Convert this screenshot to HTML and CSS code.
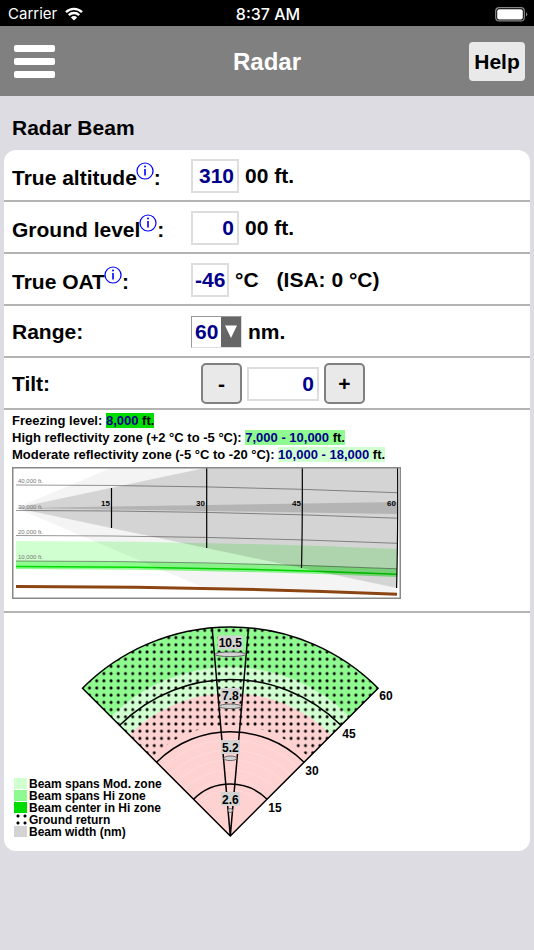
FILE: index.html
```html
<!doctype html>
<html lang="en">
  <head>
    <meta charset="utf-8">
    <meta name="viewport" content="width=device-width, initial-scale=1">
    <title>Radar</title>
    <link rel="stylesheet" href="styles.css">
  </head>
  <body>
    <div class="status-bar">
      <div class="carrier">
        <span>Carrier</span>
        <svg width="18" height="14" viewBox="0 0 18 14" aria-hidden="true">
          <g fill="none" stroke="#fff" stroke-width="2.4">
            <path d="M1 5.2a11.4 11.4 0 0 1 16 0"/>
            <path d="M3.8 8.2a7.4 7.4 0 0 1 10.4 0"/>
          </g>
          <path d="M9 13.6L5.9 10.4a4.4 4.4 0 0 1 6.2 0z" fill="#fff"/>
        </svg>
      </div>
      <div class="clock">8:37 AM</div>
      <div class="battery">
        <svg width="33" height="15" viewBox="0 0 33 15" aria-hidden="true">
          <rect x=".7" y=".7" width="28.6" height="13.2" rx="3.5" fill="none" stroke="#888" stroke-width="1.2"/>
          <rect x="2.2" y="2.2" width="25.6" height="10.2" rx="2" fill="#fff"/>
          <path d="M31 5q2.4 2.3 0 4.6z" fill="#888"/>
        </svg>
      </div>
    </div>
    <header>
      <button class="menu" aria-label="Menu"><i></i><i></i><i></i></button>
      <h1>Radar</h1>
      <button class="help">Help</button>
    </header>
    <main>
      <h2>Radar Beam</h2>
      <div class="card">
        <div class="row">
          <div class="name"><label for="altitude">True altitude</label><a class="info" href="#altitude" aria-label="About true altitude"><svg width="18" height="18" viewBox="0 0 18 18"><circle cx="9" cy="9" r="8"/><path d="M9 7V13.5"/><circle class="dot" cx="9" cy="4.6" r="1"/></svg></a>:</div>
          <input type="text" id="altitude" class="w3" value="310">
          <span>00 ft.</span>
        </div>
        <div class="row">
          <div class="name"><label for="ground">Ground level</label><a class="info" href="#ground" aria-label="About ground level"><svg width="18" height="18" viewBox="0 0 18 18"><circle cx="9" cy="9" r="8"/><path d="M9 7V13.5"/><circle class="dot" cx="9" cy="4.6" r="1"/></svg></a>:</div>
          <input type="text" id="ground" class="w3" value="0">
          <span>00 ft.</span>
        </div>
        <div class="row">
          <div class="name"><label for="oat">True OAT</label><a class="info" href="#oat" aria-label="About true OAT"><svg width="18" height="18" viewBox="0 0 18 18"><circle cx="9" cy="9" r="8"/><path d="M9 7V13.5"/><circle class="dot" cx="9" cy="4.6" r="1"/></svg></a>:</div>
          <input type="text" id="oat" class="w2" value="-46">
          <span>°C</span>
          <span class="isa">(ISA: 0 °C)</span>
        </div>
        <div class="row">
          <div class="name"><label for="range">Range:</label></div>
          <div class="select">
            <select id="range">
              <option>60</option>
              <option>80</option>
            </select>
            <svg width="20" height="30" viewBox="0 0 20 30" aria-hidden="true"><rect width="20" height="30" fill="#666"/><path d="M4 8.5H16L10 21z" fill="#fff"/></svg>
          </div>
          <span>nm.</span>
        </div>
        <div class="row">
          <div class="name"><label for="tilt">Tilt:</label></div>
          <div class="stepper">
            <button aria-label="Tilt down">-</button>
            <input type="text" id="tilt" value="0">
            <button aria-label="Tilt up">+</button>
          </div>
        </div>
        <div class="profile">
          <p>Freezing level: <span class="center-zone"><b>8,000</b> ft.</span></p>
          <p>High reflectivity zone (+2 °C to -5 °C): <span class="hi-zone"><b>7,000 - 10,000</b> ft.</span></p>
          <p>Moderate reflectivity zone (-5 °C to -20 °C): <span class="mod-zone"><b>10,000 - 18,000</b> ft.</span></p>
          <svg width="389" height="132" viewBox="0 0 389 132" role="img" aria-label="Beam profile">
            <!-- reflectivity zones -->
            <path d="M4 74Q195 74 385 82V102Q195 94 4 94z" fill="#d0ffd0"/>
            <path d="M4 94Q195 94 385 102V110Q195 102 4 102z" fill="#8ffc8f"/>
            <path d="M4 99.5Q195 99.5 385 107.3" class="freeze"/>
            <!-- beam -->
            <path d="M4 41L99 1H385V127Q290 121 190 120z" fill="#000" opacity=".045"/>
            <path d="M4 41L193 1H385V121z" fill="#000" opacity=".13"/>
            <path d="M4 41L385 35V47z" fill="#000" opacity=".15"/>
            <!-- altitude lines -->
            <g class="levels">
              <path d="M4 18Q195 18 385 25.7"/>
              <path d="M4 43.5Q195 43.5 385 51.2"/>
              <path d="M4 68.5Q195 68.5 385 76.3"/>
              <path d="M4 94Q195 94 385 101.8"/>
              <text x="6" y="16">40,000 ft.</text>
              <text x="6" y="42">30,000 ft.</text>
              <text x="6" y="67">20,000 ft.</text>
              <text x="6" y="92">10,000 ft.</text>
            </g>
            <path d="M4 119.5Q195 119.5 385 127.2" class="terrain"/>
            <g class="ranges">
              <path d="M99.5 21V61M194.7 1V81M290.3 1Q290.5 60 289.5 101M385.6 1Q386 70 384.6 121"/>
              <text x="98" y="39">15</text>
              <text x="193" y="39">30</text>
              <text x="289" y="39">45</text>
              <text x="384" y="39">60</text>
            </g>
            <rect x=".75" y=".75" width="387.5" height="130.5" class="frame"/>
          </svg>
        </div>
        <div class="fan">
          <svg width="526" height="238" viewBox="0 0 526 238" role="img" aria-label="Beam fan">
            <defs>
              <clipPath id="wedge"><path d="M0 0L-147.8-147.8A209 209 0 0 1 147.8-147.8z"/></clipPath>
              <pattern id="dots" x="-.4" y="-.4" width="7.2" height="7.2" patternUnits="userSpaceOnUse">
                <circle cx="3.6" cy="3.6" r="1.5"/>
              </pattern>
            </defs>
            <g transform="translate(226.3 223)">
              <g clip-path="url(#wedge)">
                <circle r="209" fill="#8ffa8f"/>
                <circle r="169" fill="#d0ffd0"/>
                <circle r="143" fill="#ffd2d2"/>
                <g fill="none" stroke="#fff" stroke-opacity=".18">
                  <circle r="46"/><circle r="56"/><circle r="66"/><circle r="76"/><circle r="86"/><circle r="96"/>
                </g>
                <circle r="160" fill="none" stroke="url(#dots)" stroke-width="98"/>
                <g class="arcs"><circle r="52"/><circle r="104.3"/><circle r="156.5"/></g>
              </g>
              <path d="M0 0L-147.8-147.8A209 209 0 0 1 147.8-147.8zM-18.2-208L0 0L18.2-208" class="arcs"/>
              <g class="widths">
                <ellipse cy="-181.7" rx="15.5" ry="2.3"/>
                <ellipse cy="-129.7" rx="11" ry="2.3"/>
                <ellipse cy="-77.7" rx="6.5" ry="2.3"/>
                <ellipse cy="-25.5" rx="2.2" ry="2"/>
                <rect x="-12.5" y="-200.5" width="25" height="14"/>
                <rect x="-9.5" y="-148" width="19" height="14"/>
                <rect x="-9.5" y="-96" width="19" height="14"/>
                <rect x="-9.5" y="-44" width="19" height="14"/>
              </g>
              <g class="fan-text" text-anchor="middle">
                <text y="-189">10.5</text>
                <text y="-136">7.8</text>
                <text y="-84">5.2</text>
                <text y="-32">2.6</text>
              </g>
              <g class="fan-text">
                <text x="149" y="-136">60</text>
                <text x="112" y="-98">45</text>
                <text x="75" y="-61">30</text>
                <text x="38" y="-24">15</text>
              </g>
            </g>
          </svg>
          <ul class="legend">
            <li><i class="mod-zone"></i>Beam spans Mod. zone</li>
            <li><i class="hi-zone"></i>Beam spans Hi zone</li>
            <li><i class="center-zone"></i>Beam center in Hi zone</li>
            <li><i class="ground"></i>Ground return</li>
            <li><i class="width"></i>Beam width (nm)</li>
          </ul>
        </div>
      </div>
    </main>
  </body>
</html>
```
FILE: styles.css
```css
* {
  box-sizing: border-box;
}

body {
  margin: 0;
  background: #dddce2;
  color: #000;
  font: bold 21px/24px "Liberation Sans", Helvetica, Arial, sans-serif;
}

button, input, select {
  font: inherit;
  margin: 0;
  padding: 0;
}

svg {
  display: block;
}

.status-bar {
  display: grid;
  grid-template-columns: 1fr auto 1fr;
  align-items: center;
  height: 26px;
  padding: 2px 6px 0 8px;
  background: #000;
  color: #fff;
  font: 500 16px/24px Inter, Roboto, sans-serif;
}

.carrier {
  display: flex;
  align-items: center;
  gap: 8px;
  font-weight: 400;
  font-size: 15px;
}

.battery {
  justify-self: end;
}

header {
  display: grid;
  grid-template-columns: 1fr auto 1fr;
  align-items: center;
  height: 70px;
  padding: 1px 9px 0;
  background: #808080;
}

h1 {
  margin: 0;
  color: #fff;
  font-size: 24px;
}

.menu {
  display: flex;
  flex-direction: column;
  gap: 6px;
  width: 41px;
  margin-left: 5px;
  background: none;
  border: 0;
}

.menu i {
  width: 100%;
  height: 7px;
  border-radius: 2px;
  background: #fff;
}

.help {
  justify-self: end;
  width: 56px;
  height: 39px;
  background: #e9e9e9;
  border: 0;
  border-radius: 4px;
  color: #000;
}

main {
  padding: 0 4px;
}

h2 {
  margin: 0;
  padding: 20px 8px 10px;
  font-size: 21px;
}

.card {
  background: #fff;
  border-radius: 12px;
}

.row {
  display: flex;
  align-items: center;
  height: 52px;
  padding: 1px 8px 0;
  border-bottom: 2px solid #b4b4b4;
}

.name {
  flex: 0 0 179px;
}

.info {
  display: inline-block;
  margin-left: -1px;
  vertical-align: 5px;
}

.info svg {
  fill: none;
  stroke: #00f;
  stroke-width: 1.2;
}

.info path {
  stroke-width: 1.6;
}

.info .dot {
  fill: #00f;
  stroke: none;
}

input {
  height: 34px;
  padding: 0 3px;
  border: 2px solid #ddd;
  background: #fff;
  color: #00008b;
  text-align: right;
}

.w3 {
  width: 48px;
}

.w2 {
  width: 38px;
  padding: 0 2px;
}

.row > span {
  margin-left: 6px;
}

.row > .isa {
  margin-left: 18px;
}

.select {
  display: flex;
  width: 51px;
  height: 32px;
  border: 1px solid #999;
  border-right-color: #ddd;
  border-bottom-color: #ddd;
}

select {
  flex: 1;
  min-width: 0;
  padding-left: 3px;
  appearance: none;
  border: 0;
  background: #fff;
  color: #00008b;
}

.stepper {
  display: flex;
  align-items: center;
  gap: 5px;
  padding-left: 10px;
}

.stepper input {
  width: 72px;
}

.stepper button {
  width: 41px;
  height: 41px;
  background: #e9e9e9;
  border: 2px solid #808080;
  border-radius: 5px;
  color: #000;
}

.profile {
  padding: 2px 8px 12px;
  border-bottom: 2px solid #b4b4b4;
  font-size: 13px;
  line-height: 17px;
}

.profile p {
  margin: 0;
}

.profile b {
  color: #00008b;
}

.profile svg {
  max-width: 100%;
  margin-top: 4px;
}

.center-zone {
  background: #00dc00;
}

.hi-zone {
  background: #8ffa8f;
}

.mod-zone {
  background: #d0ffd0;
}

.freeze {
  fill: none;
  stroke: #00dc00;
  stroke-width: 1.5;
}

.levels path {
  fill: none;
  stroke: #000;
  stroke-opacity: .4;
}

.levels text {
  fill: #777;
  font-size: 6px;
  font-weight: normal;
}

.terrain {
  fill: none;
  stroke: #8b4513;
  stroke-width: 3;
}

.ranges path {
  fill: none;
  stroke: #000;
  stroke-width: 1.2;
}

.ranges text {
  font-size: 8px;
  text-anchor: end;
}

.frame {
  fill: none;
  stroke: #888;
  stroke-width: 1.5;
}

/* the legend shares the grid cell with the fan */
.fan {
  display: grid;
}

.fan svg, .legend {
  grid-area: 1 / 1;
}

.fan svg {
  max-width: 100%;
}

.arcs {
  fill: none;
  stroke: #000;
  stroke-width: 1.5;
}

.widths {
  fill: #d3d3d3;
}

.widths ellipse {
  stroke: #666;
  stroke-width: 1;
}

.fan-text {
  font-size: 12px;
}

.legend {
  align-self: end;
  justify-self: start;
  margin: 0;
  padding: 0 0 13px 10px;
  list-style: none;
  font-size: 12px;
  line-height: 12px;
}

.legend li {
  display: flex;
  gap: 2px;
}

.legend i {
  width: 13px;
  height: 11px;
}

.legend .ground {
  background: radial-gradient(circle at 4px 2px, #000 1px, transparent 2px) 0 0 / 7px 7px;
}

.legend .width {
  background: #d3d3d3;
}
```
